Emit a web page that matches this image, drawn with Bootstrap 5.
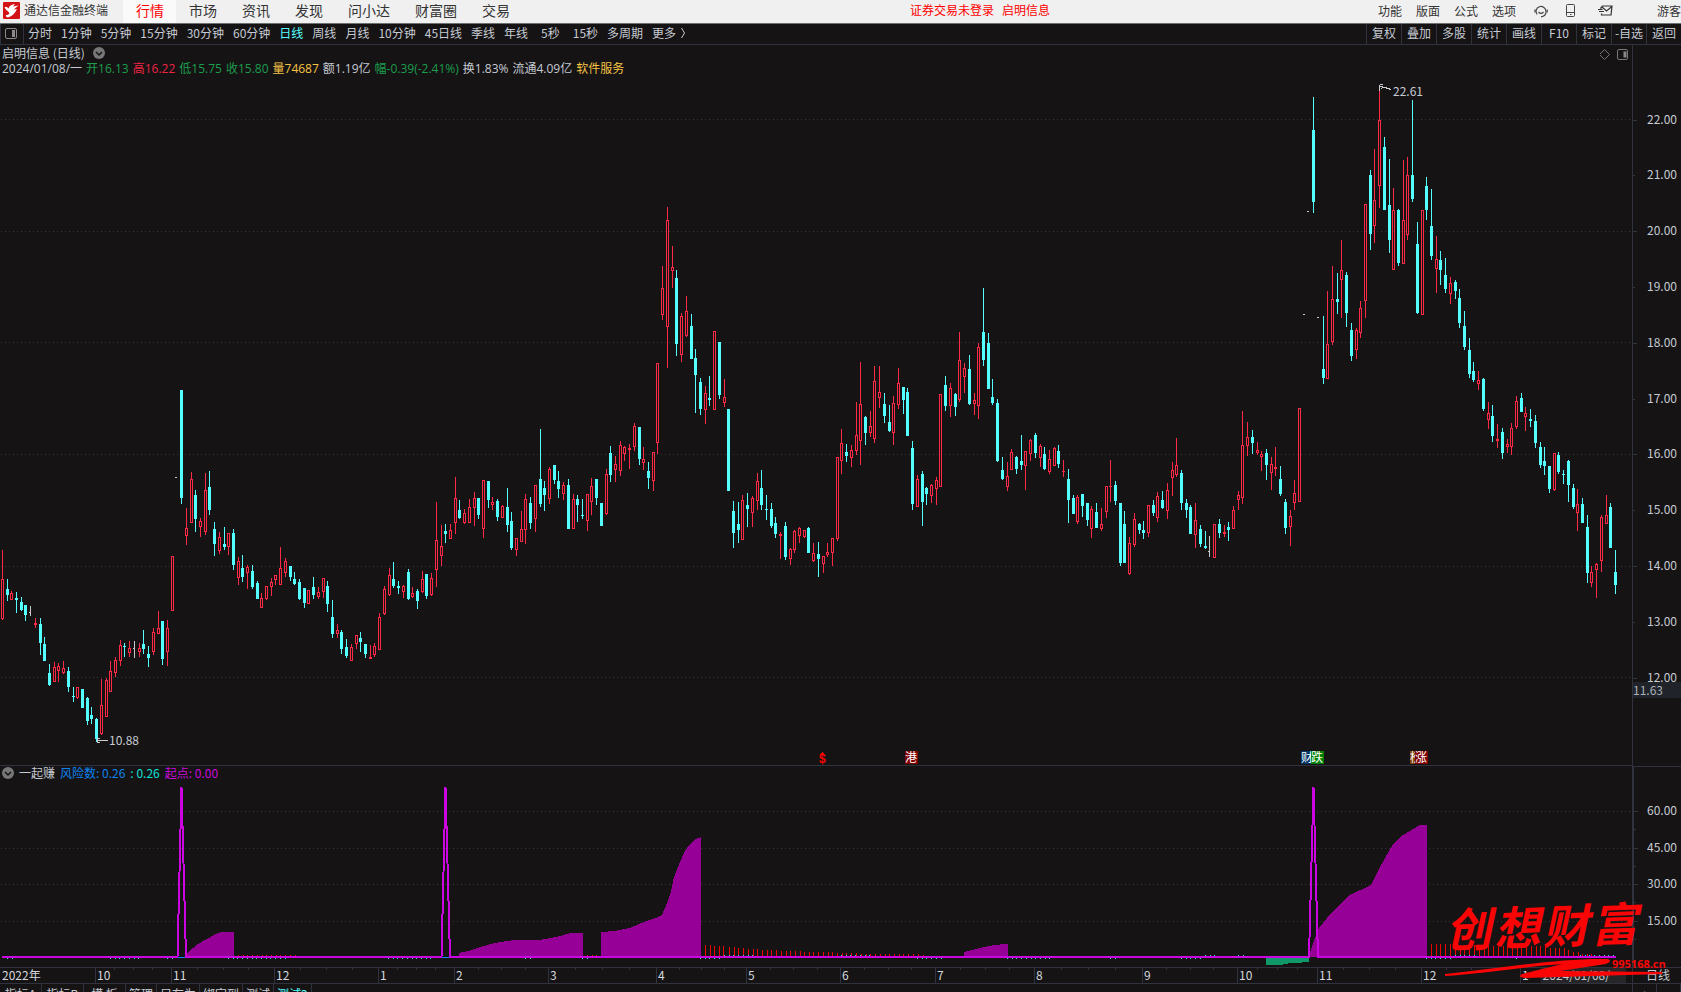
<!DOCTYPE html>
<html lang="zh-CN">
<head>
<meta charset="utf-8">
<meta name="viewport" content="width=device-width, initial-scale=1">
<title>通达信金融终端</title>
<link href="https://cdn.jsdelivr.net/npm/bootstrap@5.3.0/dist/css/bootstrap.min.css" rel="stylesheet">
<style>
:root{--ink:#151314;--rule:#30323d;--txt:#c6cad2;--cy:#54ffff;--up:#ff2a45}
body{font:12px/16px "Noto Sans CJK SC",sans-serif;background:var(--ink);color:var(--txt)}
button,a{font:inherit;color:inherit;text-decoration:none;background:none;border:0;padding:0;white-space:nowrap}
svg{display:block}
.topbar{height:24px;background:#f0f0f0;color:#333;border-bottom:1px solid #6b7070}
.logo{margin:2px 0 0 3px}
.brand-name{width:103px;line-height:16px;padding:2px 0 0 4px}
.menu a{font-size:14px;line-height:20px;padding:0 12px 0 13px;color:#333;height:23px}
.menu a.on{background:#fafafa;color:#f00}
.notice{left:910px;top:2px;color:#f00}
.account{gap:14px;padding-bottom:2px}
.guest{margin-left:30px}
.periods{height:21px;border-bottom:1px solid var(--rule)}
.side-toggle{width:24px;border-right:1px solid var(--rule);border-left:1px solid var(--rule)}
.period-list{gap:9px;padding:0 0 2px 4px}
.sec{margin-left:4px}
.on-cy{color:var(--cy)}
.tools button{width:35px;border-left:1px solid var(--rule);padding-bottom:2px}
.workspace,.pane-main,.pane-sub{min-height:0}
.pane-main{flex:721 1 0}
.pane-sub{flex:201 1 0}
.plot{min-width:0;border-bottom:1px solid var(--rule)}
.pane-sub .plot{border:0}
.scale{width:49px;border-left:1px solid var(--rule)}
.pane-sub .scale{border-top:1px solid var(--rule);border-left-width:2px}
.scale span{right:4px;line-height:14px;margin-top:-8px}
.scale i{left:0;height:1px;width:4px;background:var(--rule)}
.scale i.minor{width:2px}
.scale .last-price{left:0;right:0;line-height:16px;background:#20242a;color:#aab0b8}
.info{top:0;left:0;padding:0 2px}
.quote{gap:4px;line-height:16px;font-family:"Open Sans","Noto Sans CJK SC",sans-serif}
.pane-icons{top:3px}
.g{color:#1c9d4c}.r{color:#f02444}.y{color:#f5c344}
.sub-info{top:-1px;left:2px;gap:5px}
.c-risk{color:#0d84f0}.c-val{color:#10e0d8}.c-start{color:#c80bdc}
.tagmark{height:13px;line-height:12px;color:#fff;bottom:1px;width:13px}
.dollar{color:#f00;font:bold 12px/12px "Liberation Sans",sans-serif;bottom:0}
.months{height:17px;border-top:1px solid var(--rule);border-bottom:1px solid var(--rule)}
.months .mark-m{top:0;height:15px;line-height:13px;border-left:1px solid var(--rule);padding-left:1px;color:#d4d8de}
.months .mark-m:first-child{border:0}
.months em{top:0;width:1px;height:2px;background:var(--rule)}
.cursor-date{left:94.4%;width:85px;background:#262628;height:15px;line-height:13px;padding-left:2px;white-space:nowrap}
.cycle{width:49px;border-left:1px solid var(--rule);line-height:13px;padding-left:13px}
.tabs-row{height:8px;overflow:hidden}
.tabs-row button{height:20px;border-right:1px solid var(--rule);line-height:18px;min-width:42px}
.tabs-row .short{padding:0 3px;min-width:31px}
.zoomers{width:49px;border-left:1px solid var(--rule)}
.zoomers button{min-width:0}
.seal{right:0;bottom:0;width:240px;height:92px;pointer-events:none;color:#fa0505}
.seal-text{left:4px;top:4px;width:192px;font-size:46px;line-height:56px;font-weight:700;font-style:italic;transform:rotate(-2deg)}
.seal-url{left:171px;top:64px;font:bold 11px/16px "Open Sans",sans-serif}
</style>
</head>
<body class="vh-100 d-flex flex-column overflow-hidden">

<header class="topbar d-flex position-relative flex-shrink-0 overflow-hidden">
  <svg class="logo flex-shrink-0" width="17" height="17" viewBox="0 0 17 17"><rect width="17" height="17" rx="1" fill="#d31216"/><path d="M1.500 5.500C3 4.500 5 5.500 5.500 6.500 6 4 8.500 2.500 12 2L10 4.500 15.500 3.500C14 5 12 6 11 7.500L14 7C12 11 9 14.500 5 15.500 3 15 2.500 14 3 13 5 13.500 7 12 6 10.500 5 9 3 8 1.500 5.500Z" fill="#fff"/></svg>
  <span class="brand-name text-nowrap">通达信金融终端</span>
  <nav class="menu d-flex flex-fill"><a class="on" href="#">行情</a><a href="#">市场</a><a href="#">资讯</a><a href="#">发现</a><a href="#">问小达</a><a href="#">财富圈</a><a href="#">交易</a></nav>
  <div class="notice position-absolute d-flex gap-2 text-nowrap"><a href="#">证券交易未登录</a><a href="#">启明信息</a></div>
  <div class="account d-flex align-items-center">
    <a href="#">功能</a><a href="#">版面</a><a href="#">公式</a><a href="#">选项</a>
    <button class="ms-1" aria-label="客服"><svg width="14" height="14" viewBox="0 0 14 14" fill="none" stroke="#444" stroke-width="1.200"><path d="M3 10.500A5 5 0 1 1 12 7.500C12 10.500 10 12.500 7 12.800"/><path d="M1 5.500v3M13.200 5.500v3M4.500 8Q7 10.800 9.500 8"/></svg></button>
    <button class="ms-1" aria-label="手机"><svg width="10" height="14" viewBox="0 0 10 14" fill="none" stroke="#444"><rect x=".5" y=".5" width="8" height="12" rx="1"/><path d="M.5 8.500h8M4 10.500h1.500"/></svg></button>
    <button class="ms-2" aria-label="消息"><svg width="15" height="12" viewBox="0 0 15 12" fill="none" stroke="#333" stroke-width="1.200"><path d="M3 4.500V2.500L4.500 1H14L13 10H3.500V8.500M4 2l4.500 4L14 1.500M0 4.500h4.500M1 6.500h5"/></svg></button>
    <a class="guest" href="#">游客</a>
  </div>
</header>

<div class="periods d-flex flex-shrink-0 overflow-hidden align-items-stretch">
  <button class="side-toggle d-flex align-items-center ps-1" aria-label="侧栏"><svg width="12" height="12" viewBox="0 0 12 12"><rect x=".5" y=".5" width="11" height="10" rx="1.500" fill="none" stroke="#8b8b8b"/><path d="M7 2h3v7H7z" fill="#8b8b8b"/></svg></button>
  <div class="period-list d-flex flex-fill align-items-center">
    <button>分时</button><button>1分钟</button><button>5分钟</button><button>15分钟</button><button>30分钟</button><button>60分钟</button><button class="on-cy">日线</button><button>周线</button><button>月线</button><button>10分钟</button><button>45日线</button><button>季线</button><button>年线</button><button class="sec">5秒</button><button class="sec">15秒</button><button>多周期</button><button class="d-flex align-items-center gap-1">更多 <svg width="6" height="12" viewBox="0 0 6 12" fill="none" stroke="#c6cad2"><path d="M1.500 1 4.500 6 1.500 11"/></svg></button>
  </div>
  <div class="tools d-flex"><button>复权</button><button>叠加</button><button>多股</button><button>统计</button><button>画线</button><button>F10</button><button>标记</button><button>-自选</button><button>返回</button></div>
</div>

<main class="workspace d-flex flex-column flex-fill position-relative">
  <section class="pane-main d-flex">
    <div class="plot flex-fill position-relative">
      <svg id="price" class="w-100 h-100 position-absolute" viewBox="0 45 1632 720" preserveAspectRatio="none" shape-rendering="crispEdges"></svg>
      <div class="info position-absolute text-nowrap">
        <div class="d-flex align-items-center gap-2"><span>启明信息 (日线)</span><svg width="12" height="12" viewBox="0 0 12 12"><circle cx="6" cy="6" r="6" fill="#777"/><path d="M3 5l3 3 3-3" fill="none" stroke="#151314" stroke-width="1.500"/></svg></div>
        <div class="quote d-flex"><span>2024/01/08/一</span><span class="g">开16.13</span><span class="r">高16.22</span><span class="g">低15.75</span><span class="g">收15.80</span><span class="y">量74687</span><span>额1.19亿</span><span class="g">幅-0.39(-2.41%)</span><span>换1.83%</span><span>流通4.09亿</span><span class="y">软件服务</span></div>
      </div>
      <svg class="pane-icons position-absolute end-0" width="32" height="13" viewBox="0 0 32 13" fill="none" stroke="#777"><path d="M4.500 1.500 9.500 6.500 4.500 11.500-.5 6.500Z"/><rect x="17.500" y="1.500" width="10" height="10" rx="1.500"/><path d="M23.500 3.500h3v6h-3z" fill="#888" stroke="none"/></svg>
      <div id="notes"></div>
    </div>
    <div class="scale position-relative flex-shrink-0" id="priceScale"></div>
  </section>
  <section class="pane-sub d-flex">
    <div class="plot flex-fill position-relative">
      <svg id="risk" class="w-100 h-100 position-absolute" viewBox="0 766 1632 201" preserveAspectRatio="none" shape-rendering="crispEdges"></svg>
      <div class="sub-info position-absolute d-flex align-items-center text-nowrap"><svg width="12" height="12" viewBox="0 0 12 12"><circle cx="6" cy="6" r="6" fill="#777"/><path d="M3 5l3 3 3-3" fill="none" stroke="#151314" stroke-width="1.500"/></svg><span>一起赚</span><span class="c-risk">风险数: 0.26</span><span class="c-val">: 0.26</span><span class="c-start">起点: 0.00</span></div>
    </div>
    <div class="scale position-relative flex-shrink-0" id="riskScale"></div>
  </section>
  <div class="months d-flex flex-shrink-0">
    <div class="flex-fill position-relative"><div id="monthRow"></div><span class="cursor-date position-absolute">2024/01/08/一</span></div>
    <div class="cycle">日线</div>
  </div>
  <div class="seal position-absolute">
    <div class="seal-text position-absolute d-flex justify-content-between"><span>创</span><span>想</span><span>财</span><span>富</span></div>
    <svg class="position-absolute" width="240" height="92" viewBox="1441 892 240 92" fill="#fa0505"><path d="M1445 974C1500 968 1560 958 1608 959Q1613 961 1606 964L1560 971 1662 972V974L1525 978Q1517 977 1522 974L1562 964C1530 966 1480 974 1445 976Z"/></svg>
    <a class="seal-url position-absolute">995168.cn</a>
  </div>
</main>

<footer class="tabs-row d-flex flex-shrink-0">
  <button>指标A</button><button>指标B</button><button>模&nbsp;板</button><button class="short">管理</button><button class="short">另存为</button><button class="short">绑定到</button><button class="short">测试</button><button class="short on-cy">测试2</button>
  <div class="zoomers ms-auto d-flex"><button class="flex-fill" aria-label="放大">+</button><button class="flex-fill" aria-label="缩小">−</button></div>
</footer>

<script src="https://cdn.jsdelivr.net/npm/bootstrap@5.3.0/dist/js/bootstrap.bundle.min.js"></script>
<script>
// Candles by block: origin x/y, units per pixel, then "kind x high bodyTop bodyBottom low".
const blocks = [
[0,380,3,`r 7 510 597 717 720,c 22 597 627 645 663,r 34 633 639 660 660,c 49 636 654 660 699,c 64 651 666 690 693,c 76 675 675 705 723,g 91 678 696 699 708,r 106 714 729 735 744,c 121 714 732 789 825,c 133 771 792 843 843,c 148 852 879 915 918,r 163 846 861 906 906,r 175 849 858 873 906,r 190 843 864 879 882,c 205 861 873 921 936,c 220 921 948 951 966,r 232 921 921 954 957,c 247 927 927 984 984,c 262 951 954 1023 1035,c 274 981 1005 1017 1032,c 289 1014 1017 1077 1086,r 304 897 975 1062 1065,r 319 894 900 1011 1011,r 331 843 873 936 936,r 346 831 840 879 891,r 361 780 795 843 858,c 373 789 798 801 831,r 388 783 804 819 831,g 403 783 804 807 834,r 418 789 804 816 831,c 430 750 792 807 822,c 445 798 822 834 861,r 460 744 756 816 825,r 475 693 744 762 762,c 487 723 723 837 855,r 502 720 744 816 858,r 517 528 528 693 693,g 529 291 291 294 294,c 544 30 30 354 372,r 559 384 444 468 495,r 574 276 297 429 429,c 586 330 345 417 456,r 601 414 423 441 471,r 616 279 330 456 465,c 628 273 321 390 405,c 643 426 447 492 528,r 658 456 471 513 522,c 673 441 492 501 510,r 685 459 459 501 525,c 700 447 459 555 570,r 715 531 543 594 615,c 727 525 564 591 606,r 742 555 561 579 627,c 757 555 573 621 627,c 772 603 609 657 657,r 784 639 654 684 684,r 799 618 618 657 660`],
[270,420,3,`r 4 474 486 501 528,r 16 465 465 480 495,r 31 381 444 495 495,r 46 414 423 459 471,c 61 438 438 471 483,c 73 456 477 492 495,c 88 477 486 537 540,c 103 504 504 549 564,r 115 510 510 552 552,c 130 471 501 525 537,r 145 501 516 531 537,r 160 474 474 516 534,c 172 483 498 552 576,c 187 540 591 642 654,r 202 612 630 642 654,c 214 630 636 687 702,c 229 657 681 708 714,r 244 672 681 723 723,r 259 645 645 672 687,c 271 636 654 666 696,c 286 672 672 702 714,r 301 675 711 717 717,r 313 669 678 705 711,r 328 579 591 690 690,r 343 498 507 582 585,r 358 444 465 525 528,c 370 426 477 498 504,c 385 483 498 504 522,r 400 495 498 516 534,c 415 447 456 537 540,r 427 501 519 531 534,c 442 507 513 543 567,r 457 453 477 516 519,c 469 462 462 528 537,r 484 459 474 525 528,r 499 246 360 450 501,r 514 315 378 408 438,c 526 312 333 342 369,r 541 312 330 357 357,r 556 171 234 309 342,c 568 240 270 294 297,r 583 267 279 309 312,r 598 237 261 309 309,r 613 216 234 264 318,c 625 234 234 285 297,r 640 180 180 327 354,c 655 183 183 240 264,r 667 231 246 255 270,c 682 237 243 291 303,r 697 255 258 294 294,c 712 204 261 315 336,c 724 276 303 384 390,r 739 354 354 390 408,r 754 273 327 366 366,r 766 222 237 330 372,c 781 231 249 309 327,r 796 195 195 297 336,c 811 27 177 252 261,c 823 183 204 225 273,r 838 141 147 237 252,c 853 135 135 180 192,c 865 153 183 207 234`],
[550,200,3,`r 40 846 855 882 900,c 55 837 855 987 987,r 70 882 897 987 987,c 82 885 897 915 966,c 97 897 945 948 957,r 112 882 882 963 993,r 124 834 858 906 945,c 139 837 837 894 915,c 154 909 909 978 978,r 169 807 822 942 945,c 181 738 759 825 846,r 196 768 792 810 846,r 211 723 735 813 828,r 223 738 741 762 783,r 238 732 744 750 807,r 253 669 678 741 753,c 268 681 681 777 795,r 280 741 777 789 810,c 295 786 813 834 867,r 310 756 756 843 873,r 322 489 489 729 762,r 337 198 264 345 360,r 352 21 60 381 504,r 367 138 201 213 264,c 379 210 234 432 468,r 394 339 348 465 486,r 409 288 333 408 411,c 424 342 378 477 477,c 436 447 474 525 639,c 451 534 546 627 645,r 466 558 579 630 672,c 478 528 594 600 618,r 493 393 393 630 630,c 508 426 426 585 597,r 523 537 591 609 621,c 535 627 627 873 873,c 550 903 933 999 1044,c 565 906 972 990 1029,r 577 885 900 1020 1020,c 592 879 915 927 981,r 607 888 894 939 981,r 622 819 843 903 930,c 634 810 864 915 930,c 649 885 927 930 960,c 664 909 927 978 984,c 676 951 969 1002 1014,r 691 996 1002 1008 1077,c 706 966 978 1071 1080,r 721 1044 1047 1077 1095,r 733 990 993 1050 1059,r 748 981 984 1008 1029,r 763 990 990 1011 1014,c 775 981 984 1059 1059,r 790 1029 1059 1083 1086,c 805 1026 1062 1077 1131,r 820 1068 1068 1092 1119,r 832 1029 1056 1065 1071,r 847 1014 1014 1059 1098,r 862 771 771 1017 1023`],
[830,280,3,`r 34 447 489 543 582,c 49 492 516 528 546,r 64 495 510 534 561,r 79 366 465 513 525,r 91 246 372 483 555,c 106 408 411 459 495,r 121 393 438 459 471,r 133 258 303 477 489,r 148 258 336 354 384,c 163 339 372 408 429,c 178 375 426 453 456,r 190 348 369 459 495,r 205 264 309 375 387,c 220 321 321 360 402,c 232 324 336 468 468,c 247 483 504 672 690,r 262 585 597 681 681,c 277 573 582 666 738,c 289 621 624 642 675,r 304 612 615 648 669,r 319 591 600 627 675,r 331 342 342 621 621,c 346 288 315 378 393,r 361 309 324 378 411,c 376 339 342 381 408,r 388 156 240 360 366,r 403 249 264 291 339,c 418 225 267 372 375,r 433 339 360 372 405,r 445 189 201 378 417,c 460 24 156 240 258,c 475 159 189 327 327,c 487 297 351 369 375,c 502 357 369 543 546,c 517 531 570 597 600,r 532 546 588 621 633,r 544 507 516 570 570,c 559 528 531 567 582,c 574 465 543 555 570,r 586 513 513 558 630,r 601 477 480 522 543,c 616 459 465 519 534,r 631 492 498 534 561,c 643 501 522 567 570,r 658 510 537 576 582,r 673 501 504 558 558,c 685 495 513 552 564,r 700 540 573 576 591,c 715 567 597 660 729,c 730 645 654 702 702,r 742 645 651 726 732,c 757 642 642 678 711,c 772 669 669 720 738,r 784 678 687 747 774,c 799 669 696 744 744,r 814 684 732 747 753,r 829 618 618 696 714,r 841 540 618 621 666,c 856 603 615 663 675`],
[1110,80,3,`c 31 1269 1269 1449 1458,c 43 1293 1332 1449 1449,r 58 1371 1389 1482 1485,r 73 1299 1317 1395 1401,c 88 1329 1332 1350 1362,c 100 1323 1350 1359 1377,r 115 1275 1275 1359 1371,c 130 1260 1275 1299 1308,r 142 1236 1248 1314 1326,c 157 1233 1260 1284 1287,r 172 1209 1230 1293 1317,r 187 1146 1170 1194 1248,r 199 1074 1155 1185 1191,c 214 1170 1179 1269 1290,c 229 1257 1269 1290 1314,c 241 1275 1281 1362 1362,r 256 1269 1320 1365 1404,c 271 1335 1347 1392 1401,c 286 1353 1398 1404 1407,g 298 1368 1413 1416 1431,r 313 1332 1332 1434 1434,c 328 1317 1332 1359 1374,r 343 1335 1356 1362 1371,c 355 1326 1341 1350 1383,r 370 1278 1290 1347 1347,r 385 1233 1245 1260 1290,r 397 993 1095 1254 1272,r 412 1026 1071 1098 1128,c 427 1050 1071 1089 1122,r 442 1086 1110 1119 1125,r 454 1113 1122 1131 1173,c 469 1107 1119 1155 1200,r 484 1131 1152 1179 1230,r 496 1101 1161 1167 1188,c 511 1158 1197 1242 1248,c 526 1257 1266 1344 1362,r 541 1290 1308 1341 1398,r 553 1200 1239 1269 1290,r 568 984 984 1266 1266,g 583 702 702 705 705,g 595 393 393 396 396,c 610 51 150 366 399,g 625 711 711 714 714,c 640 708 867 894 912,r 652 633 792 897 897,r 667 558 657 786 795,c 682 579 657 666 702,r 694 480 570 600 714,c 709 576 585 699 741,c 724 729 750 828 843,r 739 744 750 810 837,r 751 663 684 759 774,r 766 372 372 663 714,c 781 270 285 462 510,r 793 207 360 438 489,r 808 24 120 318 384,c 823 171 201 390 390,c 838 237 375 480 519,r 850 324 390 570 570,c 865 387 390 549 558`],
[1360,80,2.958,`r 130 237 414 544 544,r 142 228 281 459 473,c 157 59 281 352 361,c 172 420 485 689 692,r 187 385 385 695 695,c 199 287 314 385 414,c 214 322 432 521 533,r 229 462 530 559 630,c 241 506 533 562 606,c 256 527 577 618 630,r 271 583 601 633 663,c 286 592 598 624 648,c 298 618 645 719 734,c 313 683 728 790 799,c 328 763 799 870 882,c 340 834 861 888 893,r 355 861 888 899 917,c 370 882 885 973 979,r 385 953 985 1006 1033,c 397 962 994 1053 1071,r 412 1018 1062 1068 1089,c 427 1030 1041 1104 1121,r 442 1062 1077 1086 1104,r 454 1015 1030 1086 1109,r 469 935 950 1027 1033,c 484 926 941 982 982,r 496 967 985 997 1038,c 511 973 1003 1009 1027,c 526 991 1009 1074 1089,c 541 1071 1086 1139 1148,c 553 1086 1127 1142 1169,c 568 1142 1142 1210 1222,r 583 1104 1104 1213 1216,c 595 1101 1109 1160 1166,c 610 1154 1166 1169 1195,c 625 1124 1127 1198 1248,c 640 1195 1207 1263 1269,r 652 1210 1254 1281 1334,c 667 1237 1254 1311 1311,c 682 1287 1322 1459 1488,r 694 1438 1456 1488 1500,r 709 1429 1432 1450 1532,r 724 1287 1293 1423 1456,r 739 1228 1287 1314 1314,c 751 1251 1263 1385 1385,c 766 1390 1456 1494 1521`]
];
const box = (x, y, w, h) => h > 0 ? `M${x} ${y}h${w}v${h}h${-w}z` : '';
const grid = ys => ys.map(y => `<path d="M1 ${y + .5}H1632" stroke="#36363b" stroke-dasharray="1 3"/>`).join('');

let cyan = '', red = '', ring = '', grey = '';
for (const [ox, oy, s, rows] of blocks) for (const row of rows.split(',')) {
  const [k, ...n] = row.split(' ');
  const x = ox + Math.floor(n[0] / 3);
  const [h, t, b, l] = n.slice(1).map(v => oy + Math.round(v / s));
  if (k === 'c') cyan += box(x, h, 1, l - h) + box(x - 1, t, 3, b - t);
  else if (k === 'g') grey += box(x, h, 1, l - h) + box(x - 1, t, 2, 1);
  else {
    red += box(x, h, 1, t - h) + box(x, b, 1, l - b);
    if (b - t < 3) red += box(x - 1, t, 3, b - t);
    else ring += `M${x - .5} ${t + .5}h2v${b - t - 1}h-2z`;
  }
}
price.innerHTML = grid([119, 231, 342, 454, 566, 677]) +
  `<path d="${cyan}" fill="#54ffff"/><path d="${red}" fill="#ff2a45"/><path d="${ring}" fill="none" stroke="#ff2a45"/><path d="${grey}" fill="#c8c8c8"/>
  <path d="M97 740.500h11M97.500 738v5M98 738.500h2M98 742.500h2M1379.500 85v6M1380 84.500h3M1380 86.500l5 1 6 2M1381 88.500h1" stroke="#c8cad0" fill="none"/>
  <path d="M822 752l3 3h-6z" fill="red"/>`;

const px = x => x / 1632 * 100 + '%';
notes.innerHTML = [[109, 732, '10.88'], [1393, 83, '22.61']].map(([x, y, t]) => `<span class="position-absolute" style="left:${px(x)};top:${(y - 45) / 7.2}%">${t}</span>`).join('') +
  `<span class="dollar position-absolute" style="left:${px(819)}">$</span>` +
  [[905, '#800000', '港'], [1301, '#003366', '财'], [1311, '#008000', '跌'], [1410, '#804000', '榜'], [1415, '#800000', '涨']].map(([x, c, t]) => `<span class="tagmark position-absolute" style="left:${px(x)};background:${c}">${t}</span>`).join('');

const tick = (p, major) => `<i class="position-absolute ${major ? '' : 'minor'}" style="top:${p}%"></i>`;
priceScale.innerHTML = `<span class="last-price position-absolute" style="top:${645 / 7.21}%">11.63</span>` + Array.from({length: 11}, (_, i) => {
  const p = (74.5 + i * 55.8) / 7.21;
  return tick(p, i % 2 === 0) + `<span class="position-absolute" style="top:${p}%">${22 - i}.00</span>`;
}).join('');
riskScale.innerHTML = [60, 45, 30, 15].map((v, i) => {
  const p = (44.5 + i * 36.6) / 2.01;
  return tick(p, true) + tick(p + 9.1, false) + `<span class="position-absolute" style="top:${p}%">${v}.00</span>`;
}).join('');

// Risk histogram, signal line and dotted markers around the zero line.
const areas = ['187,953 193,948 198,944 207,939 214,935 221,932 234,932 234,957 187,957',
 '459,953 468,951 480,947 495,943 514,940 538,940 546,939 560,936 571,933 583,933 583,957 459,957',
 '601,932 614,931 630,928 646,921 656,918 662,915 667,903 671,892 674,877 680,862 685,851 690,844 696,839 701,837 701,957 601,957',
 '964,952 980,948 994,945 1005,944 1008,944 1008,957 964,957',
 '1309,956 1313,943 1319,928 1327,918 1340,904 1348,896 1371,885 1380,867 1393,844 1400,837 1413,829 1420,825 1427,825 1427,957 1309,957'];
const run = (a, b, y, h = 1) => { let d = ''; for (let x = a; x <= b + 1; x += 4.714) d += box(Math.round(x), y, 1, h); return d; };
let sticks = run(238, 295, 955) + run(587, 597, 955);
for (const [a, b, y] of [[705, 709, 945], [714, 724, 946], [729, 734, 947], [738, 743, 948], [748, 757, 949], [762, 776, 950], [781, 799, 951], [804, 832, 952], [837, 856, 953], [861, 917, 954], [923, 924, 955],
  [1431, 1451, 944], [1455, 1474, 945], [1479, 1545, 946], [1550, 1564, 948], [1568, 1569, 950], [1573, 1578, 952], [1582, 1592, 954]]) sticks += run(a, b, y, 957 - y);
let dots = '';
for (const [a, b] of [[7, 11], [110, 139], [167, 172], [228, 285], [388, 431], [525, 530], [582, 587], [700, 719], [917, 940], [1007, 1049], [1110, 1115], [1181, 1200], [1426, 1450], [1516, 1517]]) dots += run(a, b, 958);
for (const [a, b] of [[724, 752], [841, 870], [1205, 1214], [1238, 1242], [1455, 1475], [1580, 1616]]) dots += run(a, b, 955);
risk.innerHTML = grid([811, 848, 884, 921]) + areas.map(p => `<polygon points="${p}" fill="#960096"/>`).join('') +
  `<path d="M1266 958h43v4h-7v1h-14v1h-5v1h-17z" fill="#109868"/><path d="${sticks}" fill="#f00000"/><path d="${dots}" fill="#20e8e8"/>
  <path d="M177 957.500h10M441 957.500h10" stroke="#0a84ff"/>
  <path d="M2 957H177.500L181.500 787 186 957H441.500L445.500 787 450 957H1309L1313.500 787 1318 957H1616" fill="none" stroke="#cc06e0" stroke-width="2" stroke-linejoin="bevel"/>`;

const ms = [[1, '2022年'], [95, 10], [171, 11], [274, 12], [378, 1], [454, 2], [548, 3], [656, 4], [746, 5], [840, 6], [935, 7], [1034, 8], [1142, 9], [1237, 10], [1317, 11], [1421, 12], [1520, 1], [1632, '']];
monthRow.innerHTML = ms.slice(0, -1).map(([x, t], i) => {
  let s = `<span class="mark-m position-absolute" style="left:${px(x)}">${t}</span>`;
  if (i) for (let q = 1; q < 4; q++) s += `<em class="position-absolute" style="left:${px(x + (ms[i + 1][0] - x) * q / 4)}"></em>`;
  return s;
}).join('');
</script>
</body>
</html>
